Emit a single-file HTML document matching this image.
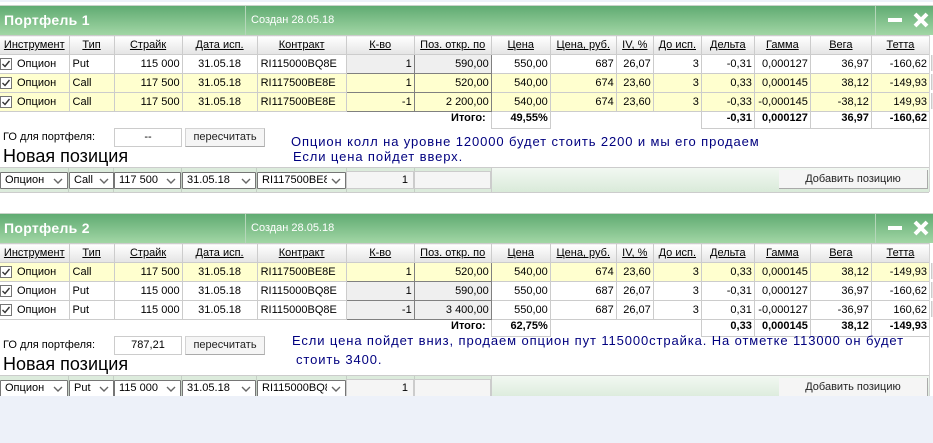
<!DOCTYPE html>
<html lang="ru"><head><meta charset="utf-8"><title>Портфель</title>
<style>
html,body{margin:0;padding:0;background:#fff}
body{width:933px;height:443px;position:relative;overflow:hidden;font:11px "Liberation Sans",Arial,sans-serif;color:#000}
.topband{position:absolute;left:0;top:0;width:933px;height:2px;background:#edf1f9}
.bottom{position:absolute;left:0;top:396px;width:933px;height:47px;background:#edf1f9}
.panel{position:absolute;left:0;width:933px;height:188px}
.title{position:absolute;left:0;top:0;width:933px;height:29px;border-top:1px solid #c9d3c9;background:linear-gradient(#60ab72,#a2d6a5)}
.title h2{position:absolute;left:4px;top:6px;margin:0;font:bold 14px "Liberation Sans",sans-serif;color:#fff;letter-spacing:.3px}
.title span{position:absolute;left:251px;top:8px;color:#fff;font-size:11px;white-space:nowrap}
.v{position:absolute;top:0;width:1px;height:29px;background:#b5d6ba}
.min{position:absolute;left:888px;top:12px;width:14px;height:4px;background:#fff}
.title svg{position:absolute;left:913px;top:6px}
table{position:absolute;left:0;top:30px;width:930px;border-collapse:collapse;table-layout:fixed}
td,th{padding:0 2px;height:18px;border:1px solid #ccc;font-size:11px;font-weight:normal;overflow:hidden;white-space:nowrap;text-align:right;line-height:16px}
th{text-align:center;text-decoration:underline;background:linear-gradient(#fff,#e4e4e4)}
td:first-child,th:first-child{border-left:0}
td.l{text-align:left;padding-left:3px}
td.c{text-align:center}
td.i{position:relative;padding-left:17px;text-align:left;line-height:18px}
td.i svg{position:absolute;left:0;top:3px}
tr.y td{background:#ffffcf}
td.e{border:1px solid #808080;background:#efefef}
tr.y td.e{background:#ffffcf}
tr.t td{border:0;background:#fff;height:16px;font-weight:bold;line-height:13px;vertical-align:top}
tr.t td.b{border:1px solid #ccc}
.side{position:absolute;left:931px;width:2px;height:16px;background:#e6e6e6;border-left:1px solid #ccc}
.rl{position:absolute;left:929px;top:30px;width:1px;height:157px;background:#d5d5d5}
.go{position:absolute;left:3px;top:126px;font-size:11px}
.inp{position:absolute;left:114px;top:123px;width:66px;height:17px;border:1px solid #ccc;text-align:center;line-height:17px;background:#fff}
.btn{position:absolute;left:185px;top:123px;width:78px;height:17px;border:1px solid #d3d3d3;border-bottom-color:#aaa;border-right-color:#bbb;text-align:center;line-height:17px;background:#f5f5f5;color:#222}
.new{position:absolute;left:3px;top:141px;font-size:18px;line-height:21px}
.note{position:absolute;color:#00007f;font-size:13px;letter-spacing:.89px;white-space:nowrap;line-height:15px}
.strip{position:absolute;left:0;top:162px;width:929px;height:26px;border-top:1px solid #ccc;border-bottom:1px solid #ccc;box-sizing:border-box;background:#dcebdc}
.tick{position:absolute;top:163px;width:1px;height:24px;background:#c4cfc4}
.grn{position:absolute;left:491px;top:162px;width:438px;height:26px;box-sizing:border-box;border-top:1px solid #ccc;border-bottom:1px solid #ccc;border-left:1px solid #ccc;background:linear-gradient(#f2f8f2,#d9ead9)}
.sel{position:absolute;top:167px;height:15px;box-sizing:content-box;border:1px solid #767676;border-radius:1px;background:#fff;line-height:15px;padding-left:4px;overflow:hidden;white-space:nowrap}
.sel i{position:absolute;right:0;top:0;width:18px;height:15px;background:#fff}
.sel i svg{position:absolute;right:4px;top:5px}
.box{position:absolute;top:166px;height:18px;background:#f5f5f5;border:1px solid #ccc;box-sizing:border-box;line-height:17px;text-align:right;padding-right:5px}
.add{position:absolute;left:779px;top:165px;width:149px;height:19px;box-sizing:border-box;background:#f5f5f5;border-right:1px solid #aaa;border-bottom:1px solid #aaa;text-align:center;line-height:19px;color:#222}
</style></head><body>
<div class="topband"></div>

<div class="panel" style="top:5px">
<div class="title"><h2>Портфель 1</h2><div class="v" style="left:245px"></div><span>Создан 28.05.18</span><div class="v" style="left:875px"></div><div class="min"></div><svg width="16" height="16" viewBox="0 0 16 16"><path d="M2 2L14 14M14 2L2 14" stroke="#fff" stroke-width="4"/></svg></div>
<table><colgroup><col style="width:69px"><col style="width:45px"><col style="width:68px"><col style="width:75px"><col style="width:89px"><col style="width:68px"><col style="width:77px"><col style="width:59px"><col style="width:66px"><col style="width:37px"><col style="width:48px"><col style="width:53px"><col style="width:56px"><col style="width:61px"><col style="width:58px"></colgroup>
<tr><th>Инструмент</th><th>Тип</th><th>Страйк</th><th>Дата исп.</th><th>Контракт</th><th>К-во</th><th>Поз. откр. по</th><th>Цена</th><th>Цена, руб.</th><th>IV, %</th><th>До исп.</th><th>Дельта</th><th>Гамма</th><th>Вега</th><th>Тетта</th></tr>
<tr><td class="i"><svg width="12" height="12"><rect x=".5" y=".5" width="11" height="11" fill="#fff" stroke="#767676"/><path d="M2.5 6L5 8.5L9.5 3" fill="none" stroke="#333" stroke-width="1.4"/></svg>Опцион</td><td class="l">Put</td><td>115 000</td><td class="c">31.05.18</td><td class="l">RI115000BQ8E</td><td class="e">1</td><td class="e">590,00</td><td>550,00</td><td>687</td><td>26,07</td><td>3</td><td>-0,31</td><td>0,000127</td><td>36,97</td><td>-160,62</td></tr>
<tr class="y"><td class="i"><svg width="12" height="12"><rect x=".5" y=".5" width="11" height="11" fill="#fff" stroke="#767676"/><path d="M2.5 6L5 8.5L9.5 3" fill="none" stroke="#333" stroke-width="1.4"/></svg>Опцион</td><td class="l">Call</td><td>117 500</td><td class="c">31.05.18</td><td class="l">RI117500BE8E</td><td class="e">1</td><td class="e">520,00</td><td>540,00</td><td>674</td><td>23,60</td><td>3</td><td>0,33</td><td>0,000145</td><td>38,12</td><td>-149,93</td></tr>
<tr class="y"><td class="i"><svg width="12" height="12"><rect x=".5" y=".5" width="11" height="11" fill="#fff" stroke="#767676"/><path d="M2.5 6L5 8.5L9.5 3" fill="none" stroke="#333" stroke-width="1.4"/></svg>Опцион</td><td class="l">Call</td><td>117 500</td><td class="c">31.05.18</td><td class="l">RI117500BE8E</td><td class="e">-1</td><td class="e">2 200,00</td><td>540,00</td><td>674</td><td>23,60</td><td>3</td><td>-0,33</td><td>-0,000145</td><td>-38,12</td><td>149,93</td></tr>
<tr class="t"><td colspan="7" style="padding-right:5px">Итого:</td><td class="b">49,55%</td><td colspan="3"></td><td class="b">-0,31</td><td class="b">0,000127</td><td class="b">36,97</td><td class="b">-160,62</td></tr>
</table>
<div class="rl"></div>
<div class="side" style="top:50px"></div><div class="side" style="top:69px"></div><div class="side" style="top:88px"></div>
<div class="go">ГО для портфеля:</div><div class="inp">--</div><div class="btn">пересчитать</div>
<div class="new">Новая позиция</div>
<div class="note" style="left:291px;top:129px">Опцион колл на уровне 120000 будет стоить 2200 и мы его продаем</div>
<div class="note" style="left:293px;top:144px">Если цена пойдет вверх.</div>
<div class="strip"></div><div class="grn"></div>
<div class="tick" style="left:68px"></div><div class="tick" style="left:113px"></div><div class="tick" style="left:181px"></div><div class="tick" style="left:256px"></div><div class="tick" style="left:346px"></div><div class="tick" style="left:414px"></div>
<div class="sel" style="left:0;width:62px">Опцион<i><svg width="10" height="6"><path d="M1 1L5 5L9 1" fill="none" stroke="#666" stroke-width="1.4"/></svg></i></div>
<div class="sel" style="left:69px;width:39px">Call<i><svg width="10" height="6"><path d="M1 1L5 5L9 1" fill="none" stroke="#666" stroke-width="1.4"/></svg></i></div>
<div class="sel" style="left:114px;width:61px">117 500<i><svg width="10" height="6"><path d="M1 1L5 5L9 1" fill="none" stroke="#666" stroke-width="1.4"/></svg></i></div>
<div class="sel" style="left:182px;width:68px">31.05.18<i><svg width="10" height="6"><path d="M1 1L5 5L9 1" fill="none" stroke="#666" stroke-width="1.4"/></svg></i></div>
<div class="sel" style="left:257px;width:83px">RI117500BE8E<i><svg width="10" height="6"><path d="M1 1L5 5L9 1" fill="none" stroke="#666" stroke-width="1.4"/></svg></i></div>
<div class="box" style="left:346px;width:68px">1</div><div class="box" style="left:414px;width:77px"></div>
<div class="add">Добавить позицию</div>
</div>

<div class="panel" style="top:213px">
<div class="title"><h2>Портфель 2</h2><div class="v" style="left:245px"></div><span>Создан 28.05.18</span><div class="v" style="left:875px"></div><div class="min"></div><svg width="16" height="16" viewBox="0 0 16 16"><path d="M2 2L14 14M14 2L2 14" stroke="#fff" stroke-width="4"/></svg></div>
<table><colgroup><col style="width:69px"><col style="width:45px"><col style="width:68px"><col style="width:75px"><col style="width:89px"><col style="width:68px"><col style="width:77px"><col style="width:59px"><col style="width:66px"><col style="width:37px"><col style="width:48px"><col style="width:53px"><col style="width:56px"><col style="width:61px"><col style="width:58px"></colgroup>
<tr><th>Инструмент</th><th>Тип</th><th>Страйк</th><th>Дата исп.</th><th>Контракт</th><th>К-во</th><th>Поз. откр. по</th><th>Цена</th><th>Цена, руб.</th><th>IV, %</th><th>До исп.</th><th>Дельта</th><th>Гамма</th><th>Вега</th><th>Тетта</th></tr>
<tr class="y"><td class="i"><svg width="12" height="12"><rect x=".5" y=".5" width="11" height="11" fill="#fff" stroke="#767676"/><path d="M2.5 6L5 8.5L9.5 3" fill="none" stroke="#333" stroke-width="1.4"/></svg>Опцион</td><td class="l">Call</td><td>117 500</td><td class="c">31.05.18</td><td class="l">RI117500BE8E</td><td class="e">1</td><td class="e">520,00</td><td>540,00</td><td>674</td><td>23,60</td><td>3</td><td>0,33</td><td>0,000145</td><td>38,12</td><td>-149,93</td></tr>
<tr><td class="i"><svg width="12" height="12"><rect x=".5" y=".5" width="11" height="11" fill="#fff" stroke="#767676"/><path d="M2.5 6L5 8.5L9.5 3" fill="none" stroke="#333" stroke-width="1.4"/></svg>Опцион</td><td class="l">Put</td><td>115 000</td><td class="c">31.05.18</td><td class="l">RI115000BQ8E</td><td class="e">1</td><td class="e">590,00</td><td>550,00</td><td>687</td><td>26,07</td><td>3</td><td>-0,31</td><td>0,000127</td><td>36,97</td><td>-160,62</td></tr>
<tr><td class="i"><svg width="12" height="12"><rect x=".5" y=".5" width="11" height="11" fill="#fff" stroke="#767676"/><path d="M2.5 6L5 8.5L9.5 3" fill="none" stroke="#333" stroke-width="1.4"/></svg>Опцион</td><td class="l">Put</td><td>115 000</td><td class="c">31.05.18</td><td class="l">RI115000BQ8E</td><td class="e">-1</td><td class="e">3 400,00</td><td>550,00</td><td>687</td><td>26,07</td><td>3</td><td>0,31</td><td>-0,000127</td><td>-36,97</td><td>160,62</td></tr>
<tr class="t"><td colspan="7" style="padding-right:5px">Итого:</td><td class="b">62,75%</td><td colspan="3"></td><td class="b">0,33</td><td class="b">0,000145</td><td class="b">38,12</td><td class="b">-149,93</td></tr>
</table>
<div class="rl"></div>
<div class="side" style="top:50px"></div><div class="side" style="top:69px"></div><div class="side" style="top:88px"></div>
<div class="go">ГО для портфеля:</div><div class="inp">787,21</div><div class="btn">пересчитать</div>
<div class="new">Новая позиция</div>
<div class="note" style="left:292px;top:120px">Если цена пойдет вниз, продаем опцион пут 115000страйка. На отметке 113000 он будет</div>
<div class="note" style="left:296px;top:139px">стоить 3400.</div>
<div class="strip"></div><div class="grn"></div>
<div class="tick" style="left:68px"></div><div class="tick" style="left:113px"></div><div class="tick" style="left:181px"></div><div class="tick" style="left:256px"></div><div class="tick" style="left:346px"></div><div class="tick" style="left:414px"></div>
<div class="sel" style="left:0;width:62px">Опцион<i><svg width="10" height="6"><path d="M1 1L5 5L9 1" fill="none" stroke="#666" stroke-width="1.4"/></svg></i></div>
<div class="sel" style="left:69px;width:39px">Put<i><svg width="10" height="6"><path d="M1 1L5 5L9 1" fill="none" stroke="#666" stroke-width="1.4"/></svg></i></div>
<div class="sel" style="left:114px;width:61px">115 000<i><svg width="10" height="6"><path d="M1 1L5 5L9 1" fill="none" stroke="#666" stroke-width="1.4"/></svg></i></div>
<div class="sel" style="left:182px;width:68px">31.05.18<i><svg width="10" height="6"><path d="M1 1L5 5L9 1" fill="none" stroke="#666" stroke-width="1.4"/></svg></i></div>
<div class="sel" style="left:257px;width:83px">RI115000BQ8E<i><svg width="10" height="6"><path d="M1 1L5 5L9 1" fill="none" stroke="#666" stroke-width="1.4"/></svg></i></div>
<div class="box" style="left:346px;width:68px">1</div><div class="box" style="left:414px;width:77px"></div>
<div class="add">Добавить позицию</div>
</div>

<div class="bottom"></div>
</body></html>
